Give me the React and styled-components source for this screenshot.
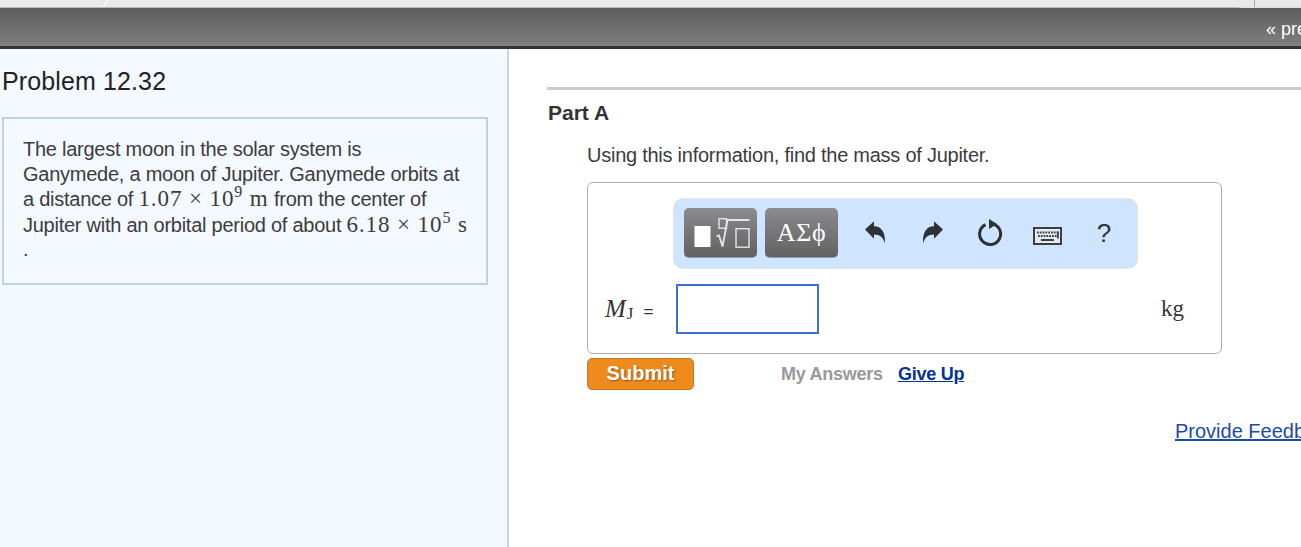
import React from "react";
import styled, { createGlobalStyle } from "styled-components";

const Global = createGlobalStyle`
  html, body {
    margin: 0;
    padding: 0;
    background: #fff;
    overflow: hidden;
  }
  * {
    box-sizing: border-box;
  }
`;

const Page = styled.div`
  width: 1301px;
  height: 547px;
  overflow: hidden;
  font-family: "Liberation Sans", Arial, sans-serif;
  color: #333;
  display: flex;
  flex-direction: column;
`;

const TopStrip = styled.div`
  height: 8px;
  flex: none;
  display: flex;
  background: #e9e9e9;
  border-bottom: 1px solid #b9b9b9;
  border-image: linear-gradient(90deg, #b9b9b9 1238px, #dcdcdc 1238px) 1;
`;

const StripTab = styled.div`
  width: ${(p) => p.$width}px;
  flex: none;
  border-right: ${(p) => (p.$line ? "1px solid #a9a9a9" : "none")};
`;

const StripSlant = styled.svg`
  flex: none;
  display: block;
`;

const Header = styled.div`
  height: 41px;
  flex: none;
  display: flex;
  align-items: center;
  justify-content: flex-end;
  background: linear-gradient(#5c5d5c 0, #5f605f 4px, #7b7c7b 34px, #868686 38px);
  border-bottom: 3px solid #343434;
  overflow: hidden;
`;

const PrevLink = styled.a`
  font-size: 18px;
  color: #fff;
  width: 35px;
  white-space: nowrap;
  overflow: hidden;
  margin-top: 4px;
`;

const Body = styled.div`
  flex: 1;
  display: flex;
  min-height: 0;
`;

const Sidebar = styled.aside`
  width: 509px;
  flex: none;
  background: #f4f8ff;
  border-right: 2px solid #c6d6e8;
  padding: 18px 20px 0 2px;
`;

const ProblemTitle = styled.h1`
  margin: 0 0 21px;
  font-size: 25px;
  line-height: 29px;
  letter-spacing: 0.12px;
  font-weight: normal;
  color: #222;
`;

const ProblemBox = styled.div`
  width: 486px;
  height: 168px;
  border: 2px solid #bdd3e8;
  padding: 18px 0 0 19px;
  font-size: 20px;
  line-height: 25px;
  letter-spacing: -0.25px;
  color: #3c3c3c;
`;

const TextLine = styled.div`
  white-space: nowrap;
  height: ${(p) => p.$height || 25}px;
`;

const MathText = styled.span`
  font-family: "Liberation Serif", "Times New Roman", serif;
  font-size: 23px;
  letter-spacing: 0.9px;
`;

const Sup = styled.sup`
  font-size: 16px;
  line-height: 0;
  vertical-align: 9px;
`;

const Main = styled.main`
  flex: 1;
  min-width: 0;
  padding: 38px 0 0 38px;
  overflow: hidden;
`;

const Rule = styled.div`
  height: 3px;
  background: #cccccc;
`;

const PartTitle = styled.h2`
  margin: 11px 0 0 1px;
  font-size: 21px;
  line-height: 24px;
  font-weight: bold;
  color: #333;
`;

const Question = styled.p`
  margin: 18px 0 15px 40px;
  font-size: 20px;
  line-height: 24px;
  letter-spacing: -0.25px;
  color: #3c3c3c;
`;

const AnswerBox = styled.div`
  width: 635px;
  height: 172px;
  margin-left: 40px;
  border: 1px solid #adadad;
  border-radius: 6px;
  padding: 16px 37px 0 17px;
  background: #fff;
`;

const ToolbarRow = styled.div`
  display: flex;
  justify-content: flex-start;
  padding-left: 69px;
`;

const Toolbar = styled.div`
  width: 463px;
  height: 69px;
  display: flex;
  align-items: flex-start;
  padding: 9px 0 0 10px;
  background: #cfe4fe;
  border-radius: 9px;
  box-shadow: 0 0 0 1px #e3e3e3;
`;

const TemplateButton = styled.div`
  width: 73px;
  height: 50px;
  flex: none;
  margin-right: 8px;
  display: flex;
  align-items: center;
  justify-content: center;
  border-radius: 5px;
  color: #fff;
  background: linear-gradient(#8a8a90, #626262);
  border-bottom: 1px solid #8f9aa5;
  font-family: "Liberation Serif", serif;
  font-size: 26px;
  letter-spacing: 0.6px;
`;

const ToolIcon = styled.div`
  width: ${(p) => p.$width}px;
  height: 50px;
  flex: none;
  display: flex;
  align-items: center;
  justify-content: center;
  padding-top: ${(p) => p.$drop || 0}px;
  color: #2d3234;
  font-size: ${(p) => p.$size || 22}px;
`;

const EquationRow = styled.div`
  display: flex;
  align-items: center;
  margin-top: 16px;
  height: 50px;
`;

const EquationLabel = styled.div`
  width: 71px;
  flex: none;
  font-family: "Liberation Serif", serif;
  font-size: 25px;
  color: #333;
  white-space: nowrap;
  margin-top: -1px;
`;

const Subscript = styled.span`
  font-size: 17px;
  font-style: normal;
  line-height: 0;
  vertical-align: -2px;
  margin-left: 1px;
`;

const Equals = styled.span`
  font-family: "Liberation Sans", sans-serif;
  font-size: 17px;
  margin-left: 10px;
`;

const AnswerInput = styled.input`
  width: 143px;
  height: 50px;
  border: 2px solid #3f6fcf;
  background: #fff;
  outline: none;
`;

const Unit = styled.div`
  margin-left: auto;
  font-family: "Liberation Serif", serif;
  font-size: 23px;
  color: #333;
`;

const ActionRow = styled.div`
  display: flex;
  align-items: center;
  margin: 4px 0 0 40px;
`;

const SubmitButton = styled.button`
  width: 107px;
  height: 32px;
  padding: 0 0 2px;
  border: 1px solid #c6741f;
  border-radius: 5px;
  background: #ef8b1d;
  color: #fff;
  font-family: "Liberation Sans", sans-serif;
  font-size: 20px;
  font-weight: bold;
  text-shadow: 1px 1px 2px #8a5210;
`;

const MutedLink = styled.span`
  margin-left: 87px;
  font-size: 18px;
  font-weight: bold;
  letter-spacing: -0.25px;
  color: #999;
`;

const GiveUpLink = styled.a`
  margin-left: 15px;
  font-size: 18px;
  font-weight: bold;
  letter-spacing: -0.25px;
  color: #003399;
  text-decoration: underline;
`;

const FeedbackRow = styled.div`
  margin: 29px 0 0 628px;
  white-space: nowrap;
  font-size: 20px;
  line-height: 24px;
`;

const FeedbackLink = styled.a`
  color: #1a4ba6;
  text-decoration: underline;
`;

function TemplateIcon() {
  return (
    <svg width="58" height="36" viewBox="0 0 58 36" fill="none">
      <rect x="2.5" y="11" width="16" height="21" fill="#fff" />
      <rect x="27" y="3.7" width="7.5" height="9.5" stroke="#e6e6e6" strokeWidth="1.4" />
      <path d="M24.5 21.5l2.5-1 3.5 11 5-26.5h22" stroke="#e6e6e6" strokeWidth="1.8" />
      <rect x="44" y="13.7" width="13" height="18.5" stroke="#e6e6e6" strokeWidth="1.4" />
    </svg>
  );
}

function UndoIcon() {
  return (
    <svg width="22" height="24" viewBox="0 0 22 24" fill="#2d3234">
      <path d="M1 8.5L10 .3v4.9c7.5 0 11.5 6 11 17.3-1.6-5.8-5-9-11-9v4.2z" />
    </svg>
  );
}

function RedoIcon() {
  return (
    <svg width="22" height="24" viewBox="0 0 22 24" fill="#2d3234">
      <path d="M21 8.5L12 .3v4.9C4.500 5.200 .5 11.200 1 22.500c1.600-5.800 5-9 11-9v4.200z" />
    </svg>
  );
}

function ResetIcon() {
  return (
    <svg width="26" height="28" viewBox="0 0 26 28" fill="none">
      <path d="M8.500 5.600A10.500 10.500 0 1 0 15 4.700" stroke="#2d3234" strokeWidth="3" />
      <path d="M12 0l8 5-8 5z" fill="#2d3234" />
    </svg>
  );
}

function KeyboardIcon() {
  const keys = [];
  for (let i = 0; i < 8; i++) keys.push(<rect key={"a" + i} x={4 + i * 2.8} y="4.500" width="1.800" height="2" />);
  for (let i = 0; i < 7; i++) keys.push(<rect key={"b" + i} x={5 + i * 2.8} y="8" width="1.800" height="2" />);
  return (
    <svg width="29" height="18" viewBox="0 0 29 18" fill="#3a3f42">
      <rect x="1" y="1" width="27" height="16" fill="#e4ebf3" stroke="#3a3f42" strokeWidth="2" />
      {keys}
      <rect x="8" y="12" width="13" height="2" />
      <rect x="24" y="4.500" width="1.800" height="7" />
    </svg>
  );
}

export default function App() {
  return (
    <Page>
      <Global />
      <TopStrip>
        <StripTab $width={102} />
        <StripSlant width="7" height="7" viewBox="0 0 7 7">
          <path d="M1 7L6 0" stroke="#fafafa" strokeWidth="1.5" />
        </StripSlant>
        <StripTab $width={1146} $line />
      </TopStrip>
      <Header>
        <PrevLink>« prev</PrevLink>
      </Header>
      <Body>
        <Sidebar>
          <ProblemTitle>Problem 12.32</ProblemTitle>
          <ProblemBox>
            <TextLine>The largest moon in the solar system is</TextLine>
            <TextLine $height={24}>Ganymede, a moon of Jupiter. Ganymede orbits at</TextLine>
            <TextLine $height={26}>
              a distance of <MathText>1.07 × 10<Sup>9</Sup> m</MathText> from the center of
            </TextLine>
            <TextLine>
              Jupiter with an orbital period of about <MathText>6.18 × 10<Sup>5</Sup> s</MathText>
            </TextLine>
            <TextLine>.</TextLine>
          </ProblemBox>
        </Sidebar>
        <Main>
          <Rule />
          <PartTitle>Part A</PartTitle>
          <Question>Using this information, find the mass of Jupiter.</Question>
          <AnswerBox>
            <ToolbarRow>
              <Toolbar>
                <TemplateButton>
                  <TemplateIcon />
                </TemplateButton>
                <TemplateButton>ΑΣϕ</TemplateButton>
                <ToolIcon $width={57}><UndoIcon /></ToolIcon>
                <ToolIcon $width={60}><RedoIcon /></ToolIcon>
                <ToolIcon $width={54}><ResetIcon /></ToolIcon>
                <ToolIcon $width={60} $drop={6}><KeyboardIcon /></ToolIcon>
                <ToolIcon $width={54} $size={26}>?</ToolIcon>
              </Toolbar>
            </ToolbarRow>
            <EquationRow>
              <EquationLabel>
                <i>M</i><Subscript>J</Subscript><Equals>=</Equals>
              </EquationLabel>
              <AnswerInput aria-label="answer" />
              <Unit>kg</Unit>
            </EquationRow>
          </AnswerBox>
          <ActionRow>
            <SubmitButton>Submit</SubmitButton>
            <MutedLink>My Answers</MutedLink>
            <GiveUpLink>Give Up</GiveUpLink>
          </ActionRow>
          <FeedbackRow>
            <FeedbackLink>Provide Feedback</FeedbackLink>
          </FeedbackRow>
        </Main>
      </Body>
    </Page>
  );
}
